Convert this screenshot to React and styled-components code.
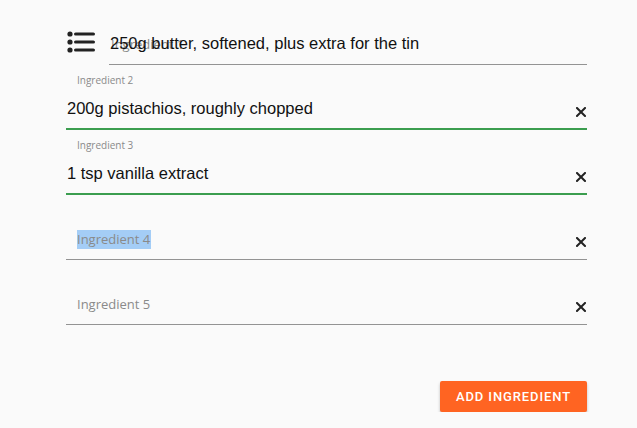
import React from 'react'
import styled, { createGlobalStyle } from 'styled-components'

const GlobalStyle = createGlobalStyle`
  html, body {
    margin: 0;
    padding: 0;
    background: #fafafa;
  }
  body {
    font-family: "Liberation Sans", Arial, sans-serif;
  }
`

const ingredients = [
  { label: 'Ingredient 1', value: '250g butter, softened, plus extra for the tin', icon: true, stuck: true },
  { label: 'Ingredient 2', value: '200g pistachios, roughly chopped', focused: true, clear: true },
  { label: 'Ingredient 3', value: '1 tsp vanilla extract', focused: true, clear: true },
  { label: 'Ingredient 4', value: '', clear: true, selected: true },
  { label: 'Ingredient 5', value: '', clear: true },
]

function ListIcon() {
  return (
    <svg width="28" height="22" viewBox="0 0 28 22">
      <circle cx="3" cy="3" r="2.6" fill="#222" />
      <circle cx="3" cy="11" r="2.6" fill="#222" />
      <circle cx="3" cy="19" r="2.6" fill="#222" />
      <rect x="7" y="1.4" width="21" height="3.2" rx="1.6" fill="#222" />
      <rect x="7" y="9.4" width="21" height="3.2" rx="1.6" fill="#222" />
      <rect x="7" y="17.4" width="21" height="3.2" rx="1.6" fill="#222" />
    </svg>
  )
}

function ClearIcon() {
  return (
    <svg width="10" height="10" viewBox="0 0 10 10">
      <path d="M1 1 L9 9 M9 1 L1 9" stroke="#222" strokeWidth="2" strokeLinecap="square" />
    </svg>
  )
}

function App() {
  return (
    <>
      <GlobalStyle />
      <Page>
        {ingredients.map((item) => (
          <Row key={item.label}>
            {item.icon && (
              <IconBox>
                <ListIcon />
              </IconBox>
            )}
            <Field $focused={item.focused}>
              {item.value ? (
                <>
                  <Label $floated={!item.stuck}>{item.label}</Label>
                  <Value>{item.value}</Value>
                </>
              ) : (
                <Placeholder>
                  <Mark $selected={item.selected}>{item.label}</Mark>
                </Placeholder>
              )}
              {item.clear && (
                <Clear>
                  <ClearIcon />
                </Clear>
              )}
            </Field>
          </Row>
        ))}
        <Actions>
          <AddButton>Add Ingredient</AddButton>
        </Actions>
      </Page>
    </>
  )
}

export default App

const Page = styled.div`
    width: 521px;
    padding-left: 66px;
    display: flex;
    flex-direction: column;
`
const Row = styled.div`
    display: flex;
    align-items: flex-start;
    height: 65px;
`
const IconBox = styled.div`
    width: 42px;
    padding-top: 31px;
    padding-left: 1px;
    flex-shrink: 0;
    display: flex;
`
const Field = styled.div`
    position: relative;
    flex: 1;
    height: 65px;
    box-sizing: border-box;
    display: flex;
    align-items: flex-end;
    border-bottom: ${p => p.$focused ? '2px solid #3b9d4f' : '1px solid #939393'};
    padding-bottom: ${p => p.$focused ? '11px' : '12px'};
`
const Label = styled.span`
    position: absolute;
    left: ${p => p.$floated ? '11px' : '2px'};
    top: ${p => p.$floated ? '8px' : '37px'};
    font-family: "Open Sans", "Noto Sans", sans-serif;
    font-size: ${p => p.$floated ? '10px' : '13px'};
    color: #8a8a8a;
    line-height: 14px;
`
const Value = styled.div`
    position: relative;
    flex: 1;
    font-size: 16.5px;
    line-height: 18px;
    color: #111;
    padding-left: 1px;
    white-space: nowrap;
`
const Placeholder = styled.div`
    flex: 1;
    padding-left: 11px;
    padding-bottom: 0;
    font-family: "Open Sans", "Noto Sans", sans-serif;
    font-size: 13px;
    line-height: 15px;
    color: #8a8a8a;
`
const Mark = styled.span`
    background: ${p => p.$selected ? '#a4cdf6' : 'transparent'};
    padding: 0 1px 1px 0;
`
const Clear = styled.div`
    width: 10px;
    height: 10px;
    margin-right: 1px;
    margin-bottom: 0;
    display: flex;
`
const Actions = styled.div`
    display: flex;
    justify-content: flex-end;
    margin-top: 56px;
`
const AddButton = styled.button`
    width: 147px;
    height: 31px;
    border: none;
    border-radius: 2px;
    background: #ff6422;
    color: #fff;
    font-family: Roboto, "Liberation Sans", sans-serif;
    font-weight: 500;
    font-size: 13px;
    letter-spacing: 0.9px;
    text-transform: uppercase;
    box-shadow: 0 2px 3px rgba(0, 0, 0, 0.25);
    cursor: pointer;
`
